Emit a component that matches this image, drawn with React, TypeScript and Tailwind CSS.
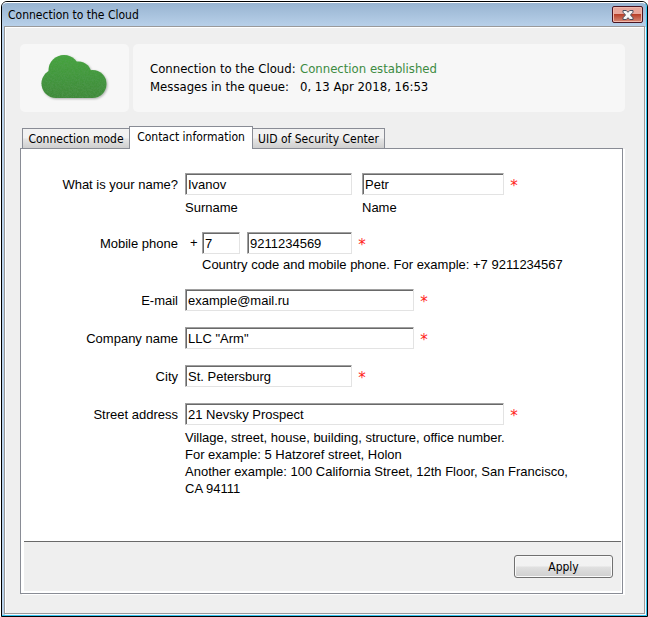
import React from "react";

const UI_FONT = "font-['DejaVu_Sans_Condensed','DejaVu_Sans',sans-serif]";

function CloudIcon() {
  return (
    <svg width="72" height="50" viewBox="0 0 72 50" aria-hidden="true">
      <defs>
        <linearGradient id="cloudFill" x1="0" y1="2" x2="0" y2="46" gradientUnits="userSpaceOnUse">
          <stop offset="0" stopColor="#45a53d" />
          <stop offset="1" stopColor="#41883b" />
        </linearGradient>
        <filter id="cloudGrain" x="-5%" y="-5%" width="115%" height="115%">
          <feTurbulence type="fractalNoise" baseFrequency="0.6" numOctaves="2" result="noise" />
          <feColorMatrix in="noise" type="matrix" values="0 0 0 0 0.1  0 0 0 0 0.35  0 0 0 0 0.1  0.9 0 0 0 -0.3" result="grain" />
          <feComposite in="grain" in2="SourceAlpha" operator="in" result="inside" />
          <feDropShadow in="SourceGraphic" dx="1" dy="1" stdDeviation="1" floodColor="#000" floodOpacity="0.3" result="shaded" />
          <feMerge>
            <feMergeNode in="shaded" />
            <feMergeNode in="inside" />
          </feMerge>
        </filter>
      </defs>
      <g filter="url(#cloudGrain)" fill="url(#cloudFill)">
        <circle cx="25" cy="17.500" r="15.500" />
        <circle cx="39.500" cy="21.500" r="13" />
        <circle cx="53.500" cy="31" r="14" />
        <circle cx="17" cy="30.500" r="14.500" />
        <path d="M17 24h36.500v21H17z" />
      </g>
    </svg>
  );
}

function CloseIcon() {
  return (
    <svg width="12" height="10" viewBox="0 0 12 10" aria-hidden="true">
      <path d="M1 .5h3.300L6 2.300 7.700.5H11v1.700L8.500 5 11 7.800v1.700H7.700L6 7.700 4.300 9.500H1V7.800L3.500 5 1 2.200z" fill="#f7f7f7" stroke="#4a4f60" strokeWidth="1" />
    </svg>
  );
}

function Required() {
  return (
    <span className="h-[22px] w-[20px] pt-[4px] text-center font-['DejaVu_Sans',sans-serif] text-[15px] leading-[18px] text-[#ff1a1a]">
      *
    </span>
  );
}

function Field({ id, value, width, label }: { id: string; value: string; width: string; label?: string }) {
  return (
    <input
      id={id}
      aria-label={label}
      defaultValue={value}
      className={`h-[22px] border border-t-[#a0a0a0] border-r-[#e3e3e3] border-b-[#e3e3e3] border-l-[#a0a0a0] bg-white pl-[2px] shadow-[inset_1px_1px_0_#696969] outline-none ${width}`}
    />
  );
}

function Row({ id, label, children }: { id: string; label: string; children: React.ReactNode }) {
  return (
    <div className="flex gap-[7px]">
      <label htmlFor={id} className="h-[22px] w-[157px] shrink-0 text-right leading-[24px]">
        {label}
      </label>
      <div className="min-w-0">{children}</div>
    </div>
  );
}

const TAB = "border border-[#898c95] bg-linear-to-b from-[#f2f2f2] from-45% via-[#e4e4e4] via-55% to-[#cfcfcf] h-[21px] text-center";

export default function App() {
  return (
    <div className="min-h-screen bg-white pt-px pl-px font-['Liberation_Sans',Arial,sans-serif] text-[13px] text-black">
      <div className="flex min-h-[calc(100vh-1px)] flex-col rounded-t-[6px] border border-black bg-[#b9d1ea]">
        <div className="flex grow flex-col rounded-t-[5px] border-t border-r border-b border-t-white border-r-[#35c5f0] border-b-[#35c5f0] bg-linear-to-b from-[#98b4d1] to-[#b9d1ea] to-[24px] pb-px">
          <header className="flex h-[23px] shrink-0 items-center justify-between pr-[3px] pl-[6px]">
            <h1 className={`text-[12px] ${UI_FONT}`}>Connection to the Cloud</h1>
            <button
              aria-label="Close"
              className="flex h-[17px] w-[31px] items-center justify-center rounded-[2px] border border-[#4a1522] bg-linear-to-b from-[#e8a69b] from-50% via-[#b8402a] via-50% to-[#d58876] shadow-[inset_0_0_0_1px_#f0b9ac]"
            >
              <CloseIcon />
            </button>
          </header>

          <main className="mr-px ml-[2px] flex grow flex-col border border-[#9a9a9a] bg-[#efefef] pr-[19px] pb-[19px] pl-[15px] shadow-[inset_1px_1px_0_#fff,1px_1px_0_#f4f8fc]">
            <section className="mt-[17px] flex gap-[4px]">
              <div className="flex h-[68px] w-[109px] shrink-0 items-center justify-center rounded-[5px] bg-[#f7f7f7]">
                <CloudIcon />
              </div>
              <dl className={`grid h-[68px] grow grid-cols-[150px_1fr] content-center rounded-[5px] bg-[#f7f7f7] pl-[17px] text-[13px] leading-[18px] ${UI_FONT}`}>
                <dt>Connection to the Cloud:</dt>
                <dd className="text-[#3d8b42]">Connection established</dd>
                <dt>Messages in the queue:</dt>
                <dd>0, 13 Apr 2018, 16:53</dd>
              </dl>
            </section>

            <div role="tablist" className={`z-10 mt-[14px] -mb-px flex items-end pl-[2px] text-[12px] ${UI_FONT}`}>
              <button role="tab" aria-selected="false" className={`w-[108px] ${TAB}`}>
                Connection mode
              </button>
              <button role="tab" aria-selected="true" className="-ml-px h-[23px] w-[124px] border border-b-0 border-[#898c95] bg-white pb-[2px]">
                Contact information
              </button>
              <button role="tab" aria-selected="false" className={`-ml-px w-[133px] ${TAB}`}>
                UID of Security Center
              </button>
            </div>

            <form className="mr-[2px] flex grow flex-col border border-[#898c95] bg-white shadow-[2px_1px_0_#fff]">
              <div className="flex grow flex-col gap-4 pt-6 pb-4">
                <Row id="surname" label="What is your name?">
                  <div className="flex gap-[10px]">
                    <div>
                      <Field id="surname" value="Ivanov" width="w-[167px]" />
                      <p className="mt-1 leading-[17px]">Surname</p>
                    </div>
                    <div>
                      <div className="flex">
                        <Field id="name" value="Petr" width="w-[142px]" />
                        <Required />
                      </div>
                      <label htmlFor="name" className="mt-1 block leading-[17px]">
                        Name
                      </label>
                    </div>
                  </div>
                </Row>
                <Row id="phone" label="Mobile phone">
                  <div className="flex">
                    <span className="w-[17px] pl-[5px] leading-[22px]">+</span>
                    <div>
                      <div className="flex">
                        <Field id="code" label="Country code" value="7" width="w-[38px] mr-[7px]" />
                        <Field id="phone" value="9211234569" width="w-[105px]" />
                        <Required />
                      </div>
                      <p className="mt-0.5 leading-[17px]">Country code and mobile phone. For example: +7 9211234567</p>
                    </div>
                  </div>
                </Row>
                <Row id="email" label="E-mail">
                  <div className="flex">
                    <Field id="email" value="example@mail.ru" width="w-[229px]" />
                    <Required />
                  </div>
                </Row>
                <Row id="company" label="Company name">
                  <div className="flex">
                    <Field id="company" value={'LLC "Arm"'} width="w-[229px]" />
                    <Required />
                  </div>
                </Row>
                <Row id="city" label="City">
                  <div className="flex">
                    <Field id="city" value="St. Petersburg" width="w-[167px]" />
                    <Required />
                  </div>
                </Row>
                <Row id="street" label="Street address">
                  <div className="flex">
                    <Field id="street" value="21 Nevsky Prospect" width="w-[319px]" />
                    <Required />
                  </div>
                  <p className="mt-1 leading-[17px]">
                    Village, street, house, building, structure, office number.
                    <br />
                    For example: 5 Hatzoref street, Holon
                    <br />
                    Another example: 100 California Street, 12th Floor, San Francisco,
                    <br />
                    CA 94111
                  </p>
                </Row>
              </div>
              <footer className="mr-px mb-[2px] ml-[3px] flex h-[50px] shrink-0 items-center justify-end border-t border-[#696969] bg-[#efefef] pr-[8px]">
                <button
                  type="button"
                  className={`h-[23px] w-[99px] rounded-[3px] border border-[#707070] bg-linear-to-b from-[#f2f2f2] from-45% via-[#dfdfdf] via-55% to-[#cfcfcf] text-[12px] shadow-[inset_0_0_0_1px_#fafafa] ${UI_FONT}`}
                >
                  Apply
                </button>
              </footer>
            </form>
          </main>
        </div>
      </div>
    </div>
  );
}
